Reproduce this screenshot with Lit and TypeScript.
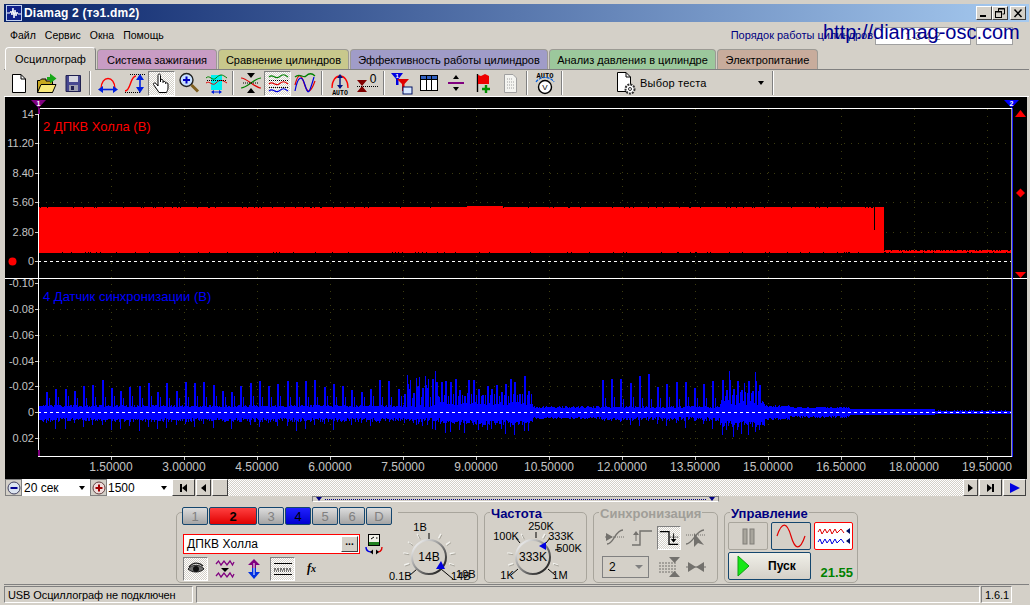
import { LitElement, html, css, svg } from 'lit';
import { customElement } from 'lit/decorators.js';

// small seeded generator, so the traces come out the same on every load
let seed = 12345;
const rnd = () => {
  seed = (seed * 1103515 + 12345) % 2147483648;
  return seed / 2147483648;
};

function redTrace() {
  let d = '';
  for (let x = 39; x < 1011; x++) {
    let top = x < 884 ? 207 + (rnd() < 0.1 ? 1 : 0) : 250 + (rnd() < 0.3 ? 1 : 0);
    if (x >= 467 && x < 503) top = 206;
    if (x === 874) top = 230;
    const bottom = 253 + (rnd() < 0.1 ? -1 : 0);
    d += `M${x}.5 ${top}V${bottom}`;
  }
  return d;
}

function blueTrace() {
  let d = '';
  const peaks = new Map<number, number>();
  const addPeaks = (from: number, to: number, step: number, min: number, max: number) => {
    for (let p = from; p < to; p += step) peaks.set(Math.round(p), min + rnd() * (max - min));
  };
  addPeaks(46, 440, 9.25, 20, 33);
  addPeaks(404, 530, 4.6, 14, 36);
  addPeaks(602, 722, 9.2, 24, 38);
  addPeaks(722, 760, 3.7, 18, 32);
  for (let x = 39; x < 1011; x++) {
    const r = rnd();
    let up: number, down: number;
    if (x < 440) { up = 5 + r * 2; down = 6 + rnd() * 4; }
    else if (x < 533) { up = 7 + r * 3; down = 8 + rnd() * 5; }
    else if (x < 600) { up = 4 + r * 2; down = 5 + rnd() * 2; }
    else if (x < 720) { up = 4 + r * 2; down = 5 + rnd() * 4; }
    else if (x < 765) { up = 7 + r * 5; down = 9 + rnd() * 6; }
    else if (x < 790) { up = 5 + r * 2; down = 6 + rnd() * 2; }
    else if (x < 850) { up = 4 + r; down = 4 + rnd() * 2; }
    else if (x < 935) { up = 3; down = 3; }
    else { up = 1 + r * 0.6; down = 2; }
    const peak = peaks.get(x);
    if (peak) { up = peak; down += rnd() * 11; }
    else if (peaks.get(x - 1)) up = peaks.get(x - 1) as number;
    if (peaks.get(x - 3) && x < 760) up += 9;
    d += `M${x}.5 ${Math.round(412 - up)}V${Math.round(412 + down)}`;
  }
  return d;
}

const RED = redTrace();
const BLUE = blueTrace();
const GRID_X = Array.from({ length: 13 }, (_, i) => 111 + i * 73);
const TOP_LABELS: [string, number][] = [['14', 114], ['11.20', 143], ['8.40', 173], ['5.60', 202], ['2.80', 232], ['0', 261]];
const LOW_LABELS: [string, number][] = [['-0.10', 283], ['-0.08', 309], ['-0.06', 335], ['-0.04', 361], ['-0.02', 386], ['0', 412], ['0.02', 438]];
const TIME_LABELS = ['1.50000', '3.00000', '4.50000', '6.00000', '7.50000', '9.00000', '10.50000', '12.00000', '13.50000', '15.00000', '16.50000', '18.00000', '19.50000'];

@customElement('scope-chart')
class ScopeChart extends LitElement {
  static styles = css`
    :host { display: block; width: 1022px; height: 382px; margin-left: 1px; background: #000; }
    svg { display: block; }
    text { font-family: "Liberation Sans", Arial, sans-serif; }
    .axis { fill: #c4c4c4; font-size: 11px; }
    .time { fill: #c4c4c4; font-size: 12px; }
    .name { font-size: 13px; }
  `;

  render() {
    const gridY = [143, 173, 202, 232, 309, 335, 361, 386, 438];
    return html`
      <svg width="1022" height="382" viewBox="5 97 1022 382" shape-rendering="crispEdges">
        ${GRID_X.map(x => svg`<path d="M${x}.5 109V456" stroke="#3c3c10" stroke-dasharray="1 6"/>
          <path d="M${x}.5 456V460" stroke="#c4c4c4"/>`)}
        ${gridY.map(y => svg`<path d="M39 ${y}.5H1011" stroke="#3c3c10" stroke-dasharray="1 6"/>`)}
        <path d=${RED} stroke="#ff0000" fill="none"/>
        <path d=${BLUE} stroke="#0000ff" fill="none"/>
        <path d="M38 261.5H1011" stroke="#fff" stroke-dasharray="3 3"/>
        <path d="M38 412.5H1011" stroke="#fff" stroke-dasharray="3 3"/>
        <path d="M38 108.5H1013M5 278.5H1027M38 456.5H1013M38.5 108V457" stroke="#fff"/>
        <path d="M1012.5 108V457" stroke="#2020ff"/>
        <path d="M1011.5 108V457" stroke="#fff" opacity="0.6"/>
        ${[...TOP_LABELS, ...LOW_LABELS].map(([t, y]) => svg`
          <text class="axis" x="34" y=${y + 4} text-anchor="end">${t}</text>
          <path d="M35 ${y}.5H38" stroke="#c4c4c4"/>`)}
        ${TIME_LABELS.map((t, i) => svg`<text class="time" x=${GRID_X[i]} y="471" text-anchor="middle">${t}</text>`)}
        <text class="name" x="43" y="131" fill="#ff0000">2 ДПКВ Холла (В)</text>
        <text class="name" x="43" y="301" fill="#0000ff">4 Датчик синхронизации (В)</text>
        <path d="M31 100H46L38.5 108Z" fill="#800080" shape-rendering="auto"/>
        <path d="M38 108H39.5V114H38Z" fill="#800080"/>
        <path d="M38 456H39.5V450H38Z" fill="#800080"/>
        <text x="38.5" y="106" font-size="7" font-weight="bold" fill="#fff" text-anchor="middle">1</text>
        <path d="M1004 100H1019L1011.5 108Z" fill="#0000ff" shape-rendering="auto"/>
        <text x="1011.5" y="106" font-size="7" font-weight="bold" fill="#fff" text-anchor="middle">2</text>
        <g fill="#ff0000" shape-rendering="auto">
          <path d="M1015 117L1020.5 110L1026 117Z"/>
          <path d="M1020.5 188.5L1025 193L1020.5 197.5L1016 193Z"/>
          <path d="M1015 272H1026L1020.5 278Z"/>
          <circle cx="12.5" cy="261.5" r="4"/>
        </g>
      </svg>
    `;
  }
}

const ic = (body: unknown, w = 24, h = 24) =>
  html`<svg width=${w} height=${h} viewBox="0 0 ${w} ${h}">${body}</svg>`;

const ICONS = {
  newDoc: svg`<path d="M5.5 3.5H14L18.5 8V21.5H5.5Z" fill="#fff" stroke="#000"/><path d="M14 3.5V8H18.5" fill="none" stroke="#000"/>`,
  open: svg`<path d="M3.5 21.5V9.5H6L7.5 8H12V10H18.5V21.5Z" fill="#c8a820" stroke="#000"/><path d="M3.5 21.5L7 13.5H22L18.5 21.5Z" fill="#f8e878" stroke="#000"/><path d="M16 2.5L22.5 7.5L16 12.5V9H13V6H16Z" fill="#18a818"/>`,
  save: svg`<path d="M5 4.5H19.5V20.5H5Z" fill="#484890" stroke="#202050"/><rect x="8" y="5" width="9" height="6" fill="#d8d8e0"/><rect x="8" y="14" width="9" height="6" fill="#a0a0b0"/><rect x="10" y="15" width="3" height="4" fill="#202050"/>`,
  widthArc: svg`<path d="M5 18C5 4 19 4 19 18" fill="none" stroke="#ff0000" stroke-width="1.4"/><path d="M4 18.5H20" stroke="#0020e0" stroke-width="1.6"/><path d="M2 18.5L7 15V22ZM22 18.5L17 15V22Z" fill="#0020e0"/>`,
  heightS: svg`<path d="M2 20C8 20 7 5 13 5" fill="none" stroke="#ff0000" stroke-width="1.4"/><path d="M7 3.5H22M2 21.5H18" stroke="#000" stroke-dasharray="1 1"/><path d="M17 7V18" stroke="#0020e0" stroke-width="1.6"/><path d="M17 3L13 9H21ZM17 22L13 16H21Z" fill="#0020e0"/>`,
  hand: svg`<path d="M8 20L3.5 13.5C3 12 5 11.5 6 12.5L8 15V4.5C8 2.5 10.5 2.5 10.5 4.5V11V9.5C10.5 8 13 8 13 9.5V11.5C13 10 15.5 10 15.5 11.5V12.5C15.5 11.5 18 11.5 18 13V17C18 19 17 20 16.5 21.5H9Z" fill="#fff" stroke="#000"/>`,
  zoom: svg`<circle cx="9.5" cy="9" r="6.5" fill="#c8e0ff" stroke="#202020" stroke-width="1.4"/><path d="M6 9H13M9.5 5.5V12.5" stroke="#0000c0" stroke-width="2"/><path d="M14.5 14L21 20.5" stroke="#806020" stroke-width="3"/>`,
  cyanWave: svg`<rect x="7" y="4" width="11" height="15" fill="#00f0f0"/><path d="M2 7C6 3 8 11 12 7S18 3 23 7" fill="none" stroke="#008000"/><path d="M2 12C6 9 8 16 12 12S18 9 23 12" fill="none" stroke="#e00000"/><path d="M3 9.5H22" stroke="#000" stroke-dasharray="1 1"/><path d="M8 21H17" stroke="#0020e0"/><path d="M7 21L10 19V23ZM18 21L15 19V23Z" fill="#0020e0"/>`,
  cross: svg`<path d="M2 7C8 7 16 17 22 17" fill="none" stroke="#e00000" stroke-width="1.2"/><path d="M2 17C8 17 16 7 22 7" fill="none" stroke="#008000" stroke-width="1.2"/><path d="M8 2H16L12 7ZM8 22H16L12 17Z" fill="#000"/><path d="M4 12H20" stroke="#000" stroke-dasharray="1 1"/>`,
  stack: svg`<path d="M3 6C7 2 9 9 13 6S18 3 22 6" fill="none" stroke="#008000" stroke-width="1.2"/><path d="M3 13C7 9 9 16 13 13S18 10 22 13" fill="none" stroke="#e00000" stroke-width="1.2"/><path d="M3 20C7 16 9 23 13 20S18 17 22 20" fill="none" stroke="#0000e0" stroke-width="1.2"/><path d="M3 9.5H22M3 16.5H22" stroke="#000" stroke-dasharray="1 1"/>`,
  overlap: svg`<path d="M2 12C5 0 8 0 11 10S17 22 22 8" fill="none" stroke="#e00000" stroke-width="1.2" transform="translate(0 2)"/><path d="M2 20C5 4 9 4 12 14S16 24 21 6" fill="none" stroke="#0000e0" stroke-width="1.2"/><path d="M2 6C7 1 10 8 13 5S19 2 22 5" fill="none" stroke="#008000" stroke-width="1.2"/>`,
  autoArc: svg`<path d="M4 17C4 1 20 1 20 17" fill="none" stroke="#ff0000" stroke-width="1.3"/><path d="M12 6V15" stroke="#001080" stroke-width="1.4"/><path d="M12 3L9 7H15ZM12 18L9 14H15Z" fill="#001080"/><text x="12" y="23.5" font-size="6.5" font-weight="bold" text-anchor="middle" font-family="Liberation Mono, monospace">AUTO</text>`,
  zero: svg`<path d="M2 9H12L7 15ZM2 21H12L7 15Z" fill="#800000"/><path d="M2 15.5H23" stroke="#000" stroke-dasharray="1 1"/><text x="18" y="12" font-size="12" text-anchor="middle" font-family="Liberation Sans, sans-serif">0</text>`,
  funnel: svg`<path d="M1 2H13L8.5 8V14H6V8Z" fill="#0000e0"/><path d="M7 8H19L14.5 13V20H12V13Z" fill="#e00000"/><rect x="13" y="16" width="9" height="7" fill="#d8e8ff" stroke="#001060"/><text x="5.5" y="6.5" font-size="6" font-weight="bold" fill="#fff">1</text>`,
  table: svg`<rect x="3.5" y="4.5" width="17" height="15" fill="#fff" stroke="#000"/><rect x="3.5" y="4.5" width="17" height="4" fill="#3060c0" stroke="#000"/><path d="M9.5 4.5V19.5M14.5 4.5V19.5" stroke="#000"/>`,
  divide: svg`<path d="M4 12H20" stroke="#800080" stroke-width="2"/><path d="M9 8L12 4L15 8ZM9 16L12 20L15 16Z" fill="#000"/>`,
  flag: svg`<path d="M6.5 3V21" stroke="#000" stroke-width="1.4"/><path d="M7 4L10 5L14 3L18 5V13H7Z" fill="#ee0000"/><path d="M15 14V22M11 18H19" stroke="#009000" stroke-width="2.4"/>`,
  note: svg`<path d="M6.5 3.5H15L18.5 7V21.5H6.5Z" fill="#f4f4f0" stroke="#a0a0a0"/><path d="M9 8H14M9 11H16M9 14H16M9 17H16" stroke="#a0a0a0" stroke-dasharray="1 1"/>`,
  autoV: svg`<text x="12" y="6.5" font-size="7" font-weight="bold" text-anchor="middle" font-family="Liberation Mono, monospace">AUTO</text><path d="M3 11C7 5 17 5 21 11" fill="none" stroke="#0060e0" stroke-width="1.2" stroke-dasharray="3 1"/><circle cx="12" cy="16" r="6.5" fill="#fff" stroke="#000" stroke-width="1.4"/><text x="12" y="19" font-size="8" text-anchor="middle" font-family="Liberation Sans, sans-serif">V</text>`,
  testDoc: svg`<path d="M3.5 1.5H12L16.5 6V20.5H3.5Z" fill="#fff" stroke="#000"/><path d="M12 1.5V6H16.5" fill="none" stroke="#000"/><circle cx="16" cy="18" r="4.5" fill="#fff" stroke="#303030" stroke-width="2" stroke-dasharray="2 1"/><circle cx="16" cy="18" r="1.5" fill="none" stroke="#303030"/>`,
};

const KNOB_TICKS = (cx: number, cy: number, skip: number[]) => {
  const out = [];
  for (let a = 135; a <= 405; a += 27) {
    if (skip.includes(a)) continue;
    const r = (a * Math.PI) / 180;
    const x1 = cx + Math.cos(r) * 21, y1 = cy + Math.sin(r) * 21;
    const x2 = cx + Math.cos(r) * 26, y2 = cy + Math.sin(r) * 26;
    out.push(svg`<path d="M${x1} ${y1}L${x2} ${y2}" stroke="#f4f4f0" stroke-width="1.4"/>
      <path d="M${x1 + 1} ${y1 + 1}L${x2 + 1} ${y2 + 1}" stroke="#a8a59c"/>`);
  }
  return out;
};

@customElement('app-root')
class AppRoot extends LitElement {
  static styles = css`
    :host { display: block; width: 1032px; height: 608px; background: #fff; overflow: hidden;
      font-family: "Liberation Sans", Arial, sans-serif; font-size: 11px; color: #000; }
    * { box-sizing: border-box; }
    svg { display: block; }
    .window { position: relative; width: 1030px; height: 605px; padding: 4px 1px 0 4px; background: #d4d0c8;
      display: flex; flex-direction: column; }

    .title { height: 18px; display: flex; align-items: center; gap: 2px; padding: 0 2px;
      background: linear-gradient(90deg, #0a246a, #a6caf0); color: #fff; font: bold 12px "Liberation Sans", sans-serif; letter-spacing: 0.2px; }
    .title .logo { width: 16px; height: 16px; background: #10208a; border: 1px solid #c0d0f0; }
    .title .caption { flex: 1; }
    .winbtn { width: 16px; height: 14px; background: #d4d0c8; border: 1px solid; border-color: #fff #404040 #404040 #fff;
      display: flex; align-items: center; justify-content: center; }
    .winbtns { display: flex; margin-right: 1px; }

    .menu { height: 25px; display: flex; align-items: center; gap: 9px; padding-left: 6px; padding-top: 1px; font-size: 10.5px; }
    .order { margin-left: auto; margin-right: 156px; color: #000080; font-size: 11px; }
    .inputs { position: absolute; top: 27px; left: 875px; display: flex; gap: 5px; }
    .inp { height: 18px; background: #fff; border: 1px solid #a0a0a0; color: #606060; text-align: center; line-height: 16px; }
    .inp.a { width: 96px; }
    .inp.b { width: 37px; }
    .url { position: absolute; top: 21px; left: 823px; font-size: 20px; color: #000090; white-space: nowrap; }

    .tabs { height: 23px; display: flex; align-items: flex-end; padding-left: 1px; gap: 1px; border-bottom: 1px solid #808080; }
    .tab { height: 20px; border: 1px solid #9c9a94; border-bottom: none; border-radius: 4px 4px 0 0; display: flex;
      align-items: center; justify-content: center; font-size: 11px; }
    .tab.on { height: 23px; background: #d4d0c8; border-color: #fff #808080 #d4d0c8 #fff; margin-bottom: -1px; width: 91px; }

    .toolbar { height: 27px; display: flex; align-items: center; padding-left: 1px; border-bottom: 1px solid #fff; }
    .tb { width: 27px; height: 25px; display: flex; align-items: center; justify-content: center; }
    .tb.on { border: 1px solid; border-color: #808080 #fff #fff #808080; background: repeating-conic-gradient(#fff 0 25%, #d4d0c8 0 50%) 0 0 / 2px 2px; }
    .sep { width: 8px; display: flex; justify-content: center; }
    .sep i { width: 2px; height: 24px; border-left: 1px solid #808080; border-right: 1px solid #fff; }
    .test { width: 203px; height: 25px; display: flex; align-items: center; padding-left: 48px; gap: 2px; font-size: 11px; letter-spacing: 0.2px; }
    .test .arrow { margin-left: 49px; }
    .arrow { width: 0; height: 0; border: 3.5px solid transparent; border-top: 4px solid #000; border-bottom: none; }

    .scroll { height: 17px; margin-left: 1px; display: flex; align-items: stretch; width: 1021px; }
    .combo { background: #fff; display: flex; align-items: center; font-size: 12px; }
    .combo .arrow { margin-left: auto; margin-right: 5px; }
    .c1 { width: 68px; padding-left: 2px; }
    .c2 { width: 65px; padding-left: 1px; }
    .round { width: 17px; background: #d4d0c8; border: 1px solid #808080; display: flex; align-items: center; justify-content: center; }
    .sb { background: #d4d0c8; border: 1px solid; border-color: #fff #404040 #404040 #fff; display: flex; align-items: center; justify-content: center; }
    .sb.w15 { width: 15px; margin-left: 1px; }
    .sb.w16 { width: 16px; margin-left: 1px; }
    .sb.w23 { width: 23px; }
    .sb.gap { margin-left: 1px; }
    .track { flex: 1; background: repeating-conic-gradient(#fff 0 25%, #d4d0c8 0 50%) 0 0 / 2px 2px; }
    .lt { width: 0; height: 0; border: 4px solid transparent; border-left: none; border-right: 5px solid #000; }
    .rt { width: 0; height: 0; border: 4px solid transparent; border-right: none; border-left: 5px solid #000; }
    .rt.blue { border-left-color: #0000e0; border-width: 5px 0 5px 10px; }
    .bar { width: 2px; height: 8px; background: #000; }

    .split { height: 6px; margin-left: 308px; width: 407px; border: 1px solid #808080; border-bottom-color: #fff;
      display: flex; align-items: center; padding: 0 3px; gap: 3px; }
    .split .dots { flex: 1; border-top: 1px dotted #000080; }
    .split b { width: 0; height: 0; border: 3px solid transparent; border-top: 4px solid #000080; border-bottom: none; }

    .panel { height: 83px; display: flex; gap: 6px; padding: 10px 0 0 172px; border-bottom: 1px solid #808080; }
    .group { position: relative; height: 71px; border: 1px solid #a8a59c; border-radius: 5px; display: flex; }
    .g1 { width: 302px; }
    .g2 { width: 103px; }
    .g3 { width: 125px; }
    .g4 { width: 134px; }
    .legend { position: absolute; top: -6px; left: 5px; padding: 0 1px; background: #d4d0c8; font: bold 13px "Liberation Sans", sans-serif; color: #000080; line-height: 13px; }
    .legend.off { color: #a09e98; }

    .left { width: 201px; padding-left: 6px; }
    .channels { display: flex; gap: 1px; margin-top: -6px; margin-left: -1px; height: 18px; width: 216px; background: #d4d0c8; }
    .ch { width: 26px; height: 18px; border: 1px solid #14466e; border-radius: 2px; background: linear-gradient(#dcdcdc, #a4a4a4);
      display: flex; align-items: center; justify-content: center; color: #808080; font-size: 13px; }
    .ch.red { width: 48px; background: linear-gradient(#ff4040, #e00000); color: #000; font-weight: bold; }
    .ch.blue { background: linear-gradient(#2020ff, #0000d0); color: #000; }
    .picker { display: flex; align-items: center; gap: 3px; margin-top: 8px; }
    .picker svg { flex: none; }
    .pick { flex: none; width: 177px; height: 20px; border: 1px solid #ff0000; outline: 1px solid #ff0000; outline-offset: -1px; background: #fff; display: flex; align-items: center; padding-left: 3px; font-size: 12px; letter-spacing: 0.1px; }
    .dots3 { margin-left: auto; margin-right: 1px; width: 17px; height: 16px; background: #d4d0c8; border: 1px solid; border-color: #fff #404040 #404040 #fff;
      text-align: center; font-weight: bold; font-size: 10px; line-height: 10px; }
    .tools { display: flex; align-items: center; margin-top: 1px; height: 25px; }
    .tool { width: 25px; height: 24px; display: flex; align-items: center; justify-content: center; margin-right: 4px; }
    .tool.on { border: 1px solid; border-color: #808080 #fff #fff #808080; background: repeating-conic-gradient(#fff 0 25%, #d4d0c8 0 50%) 0 0 / 2px 2px; }
    .fx { font: italic bold 12px "Liberation Serif", serif; }

    .sync { display: grid; grid-template-columns: repeat(4, 27px); grid-auto-rows: 29px; padding: 10px 0 0 7px; align-items: center; justify-items: center; }
    .sync .tb { opacity: 0.45; height: 24px; }
    .sync .tb.on { opacity: 1; width: 24px; }
    .dis { grid-column: span 2; justify-self: start; width: 47px; height: 22px; border: 1px solid #808080; display: flex; align-items: center; padding: 0 5px 0 6px; font-size: 12px; justify-content: space-between; margin-left: 1px; }
    .dis .arrow { border-top-color: #808080; border-width: 4px; border-bottom: none; }

    .ctl { display: grid; grid-template-columns: 40px 40px 39px; grid-template-rows: 28px 28px; gap: 2px 3px; padding: 9px 0 0 3px; }
    .cb { border: 1px solid #14466e; border-radius: 2px; background: linear-gradient(#f0efe8, #d4d0c8); display: flex; align-items: center; justify-content: center; }
    .cb.flat { border-color: #a8a59c; background: #d4d0c8; }
    .cb.wave { border-color: #ff0000; background: #fff; }
    .cb.plain { background: #d4d0c8; }
    .start { grid-column: span 2; justify-content: flex-start; padding-left: 6px; gap: 13px; font-weight: bold; font-size: 12px; }
    .count { color: #008000; font-weight: bold; font-size: 13px; align-self: end; text-align: right; }

    .status { height: 19px; display: flex; gap: 3px; padding-top: 1px; }
    .cell { height: 17px; border: 1px solid; border-color: #808080 #fff #fff #808080; display: flex; align-items: center; padding-left: 3px; font-size: 11px; letter-spacing: -0.1px; }
    .s1 { width: 189px; }
    .s2 { width: 784px; }
    .s3 { width: 31px; margin-left: -2px; }
  `;

  render() {
    return html`
      <div class="window">
        <div class="title">
          <div class="logo">${ic(svg`<path d="M0 7H3L4 5L5 9L6 2L7 12L8 4L9 10L10 6L11 8H14" fill="none" stroke="#fff"/>`, 14, 14)}</div>
          <span class="caption">Diamag 2 (тэ1.dm2)</span>
          <div class="winbtns">
            <div class="winbtn">${ic(svg`<rect x="2" y="8" width="6" height="2" fill="#000"/>`, 12, 12)}</div>
            <div class="winbtn">${ic(svg`<path d="M4.5 1.5H10.5V7H8.5M4.5 1.5V4" fill="none" stroke="#000"/><rect x="1.5" y="4.5" width="6" height="6" fill="none" stroke="#000"/><path d="M4 2H11M2 5H8" stroke="#000"/>`, 12, 12)}</div>
            <div class="winbtn" style="margin-left:2px">${ic(svg`<path d="M2.5 2.5L9.5 10M9.5 2.5L2.5 10" stroke="#000" stroke-width="1.5"/>`, 12, 12)}</div>
          </div>
        </div>

        <div class="menu">
          <span>Файл</span><span>Сервис</span><span>Окна</span><span>Помощь</span>
          <span class="order">Порядок работы цилиндров</span>
        </div>
        <div class="inputs">
          <div class="inp a">1-3-4-2</div>
          <div class="inp b"></div>
        </div>
        <div class="url">http://diamag-osc.com</div>

        <div class="tabs">
          <div class="tab on">Осциллограф</div>
          ${[
            ['Система зажигания', 120, '#c89cc4'],
            ['Сравнение цилиндров', 131, '#c8c88c'],
            ['Эффективность работы цилиндров', 198, '#a09cc8'],
            ['Анализ давления в цилиндре', 167, '#9cc89c'],
            ['Электропитание', 101, '#c8ac9c'],
          ].map(([name, w, bg]) => html`<div class="tab" style="width:${w}px;background:${bg}">${name}</div>`)}
        </div>

        <div class="toolbar">
          ${this.tb(ICONS.newDoc)}${this.tb(ICONS.open)}${this.tb(ICONS.save)}
          <div class="sep"><i></i></div>
          ${this.tb(ICONS.widthArc)}${this.tb(ICONS.heightS)}${this.tb(ICONS.hand, true)}${this.tb(ICONS.zoom)}${this.tb(ICONS.cyanWave)}
          <div class="sep"><i></i></div>
          ${this.tb(ICONS.cross)}${this.tb(ICONS.stack, true)}${this.tb(ICONS.overlap)}
          <div class="sep"><i></i></div>
          ${this.tb(ICONS.autoArc)}${this.tb(ICONS.zero)}
          <div class="sep"><i></i></div>
          ${this.tb(ICONS.funnel)}${this.tb(ICONS.table)}${this.tb(ICONS.divide)}${this.tb(ICONS.flag)}${this.tb(ICONS.note)}
          <div class="sep"><i></i></div>
          ${this.tb(ICONS.autoV)}
          <div class="sep"><i></i></div>
          <div class="test">${ic(ICONS.testDoc)}<span>Выбор теста</span><div class="arrow"></div></div>
          <div class="sep"><i></i></div>
        </div>

        <scope-chart></scope-chart>

        <div class="scroll">
          <div class="round">${ic(svg`<circle cx="7" cy="7" r="6" fill="#dce4f0" stroke="#404060"/><path d="M3.5 7H10.5" stroke="#000090" stroke-width="2"/>`, 14, 14)}</div>
          <div class="combo c1">20 сек<div class="arrow"></div></div>
          <div class="round">${ic(svg`<circle cx="7" cy="7" r="6" fill="#f0dcdc" stroke="#604040"/><path d="M3.5 7H10.5M7 3.5V10.5" stroke="#a00000" stroke-width="2"/>`, 14, 14)}</div>
          <div class="combo c2">1500<div class="arrow"></div></div>
          <div class="sb w23"><div class="bar"></div><div class="lt"></div></div>
          <div class="sb w15"><div class="lt"></div></div>
          <div class="sb w16"></div>
          <div class="track"></div>
          <div class="sb" style="width:15px"><div class="rt"></div></div>
          <div class="sb w23 gap"><div class="rt"></div><div class="bar"></div></div>
          <div class="sb w23 gap"><div class="rt blue"></div></div>
        </div>

        <div class="split"><b></b><div class="dots"></div><b></b></div>

        <div class="panel">
          <div class="group g1">
            <div class="left">
              <div class="channels">
                <div class="ch">1</div><div class="ch red">2</div><div class="ch">3</div><div class="ch blue">4</div>
                <div class="ch">5</div><div class="ch">6</div><div class="ch">D</div>
              </div>
              <div class="picker">
                <div class="pick">ДПКВ Холла<div class="dots3">...</div></div>
                ${ic(svg`<rect x="5.5" y="1.5" width="11" height="11" fill="#f0f0e8" stroke="#000"/><path d="M8 6L11 4M13 5H14.5" stroke="#000"/><rect x="6" y="9" width="10" height="3" fill="#208020"/><path d="M3 14C3 19 7 19 10 19" fill="none" stroke="#0000e0" stroke-width="1.4"/><path d="M19 14C19 19 16 19 13 19" fill="none" stroke="#e00000" stroke-width="1.4"/><path d="M10 16.5V21.5L7 19ZM13 16.5V21.5L16 19Z" fill="#000"/>`, 22, 22)}
              </div>
              <div class="tools">
                <div class="tool on">${ic(svg`<path d="M2 10C6 5 14 5 18 10C14 14 6 14 2 10Z" fill="#707070" stroke="#202020"/><circle cx="10" cy="10" r="3" fill="#101010"/><path d="M3 8C7 3 13 3 17 7" fill="none" stroke="#202020" stroke-width="1.4"/>`, 20, 20)}</div>
                <div class="tool">${ic(svg`<path d="M1 5L3.5 2L6 6L9 2L12 6L15 2L17.5 6L19 3M1 17L3.5 14L6 18L9 14L12 18L15 14L17.5 18L19 15" fill="none" stroke="#800080" stroke-width="1.3"/><path d="M6 9H14L10 13Z" fill="#000"/>`, 20, 20)}</div>
                <div class="tool">${ic(svg`<path d="M10 1L16 7H12V10H8V7H4Z" fill="#800080"/><path d="M10 21L16 14H12V10H8V14H4Z" fill="#0030e0"/><path d="M10 5V17" stroke="#fff"/>`, 20, 22)}</div>
                <div class="tool on">${ic(svg`<path d="M1 4.5H19M1 15.5H19" stroke="#000"/><path d="M1 10H19" stroke="#000" stroke-dasharray="2 1"/><path d="M1 12H19" stroke="#000" stroke-dasharray="1 1"/>`, 20, 20)}</div>
                <div class="tool fx">f<sub style="font-size:10px;line-height:0">x</sub></div>
              </div>
            </div>
            ${this.voltKnob()}
          </div>

          <div class="group g2">
            <div class="legend">Частота</div>
            ${this.freqKnob()}
          </div>

          <div class="group g3">
            <div class="legend off">Синхронизация</div>
            <div class="sync">
              <div class="tb">${ic(svg`<path d="M4 18C11 18 12 4 20 4" fill="none" stroke="#000" stroke-width="1.3"/><path d="M3 7L10 11L3 15Z" fill="#000"/><path d="M2 11H22" stroke="#000" stroke-dasharray="1 1"/>`)}</div>
              <div class="tb">${ic(svg`<path d="M2 19H10V5H22" fill="none" stroke="#000" stroke-width="1.4"/><path d="M6 8V15" stroke="#000"/><path d="M6 5L3 9H9Z" fill="#000"/>`)}</div>
              <div class="tb on">${ic(svg`<path d="M2 5H12V19H22" fill="none" stroke="#000" stroke-width="1.4"/><path d="M17 7V14" stroke="#000"/><path d="M17 17L14 13H20Z" fill="#000"/><path d="M13 11H22" stroke="#000" stroke-dasharray="1 1"/>`)}</div>
              <div class="tb">${ic(svg`<path d="M2 18C9 18 12 4 20 4" fill="none" stroke="#000" stroke-width="1.3"/><path d="M10 7L20 19L14 17L10 21Z" fill="#000"/><path d="M2 9H22" stroke="#000" stroke-dasharray="1 1"/>`)}</div>
              <div class="dis">2<div class="arrow"></div></div>
              <div class="tb">${ic(svg`<path d="M2 8H19M2 11H19M2 14H19M2 17H19" stroke="#000" stroke-dasharray="2 1"/><path d="M12 2H23L17.5 8ZM12 22H23L17.5 16Z" fill="#000"/>`)}</div>
              <div class="tb">${ic(svg`<path d="M2 12H22" stroke="#000"/><path d="M4 7L12 12L4 17ZM20 7L12 12L20 17Z" fill="#000"/>`)}</div>
            </div>
          </div>

          <div class="group g4">
            <div class="legend">Управление</div>
            <div class="ctl">
              <div class="cb flat">${ic(svg`<rect x="5" y="4" width="4" height="15" fill="#a8a59c" stroke="#807e78"/><rect x="12" y="4" width="4" height="15" fill="#a8a59c" stroke="#807e78"/>`, 20, 22)}</div>
              <div class="cb plain">${ic(svg`<path d="M2 11C7 -4 12 -3 16 11S25 26 30 11" fill="none" stroke="#e00000" stroke-width="1.2" transform="translate(0 1)"/>`, 32, 24)}</div>
              <div class="cb wave">${ic(svg`<path d="M1 7L3 4L5 9L8 4L10 8L13 4L15 9L18 4L20 8L24 4L27 8" fill="none" stroke="#e00000"/><path d="M1 17L3 14L5 19L8 14L10 18L13 14L15 19L18 14L20 18L24 14L27 18" fill="none" stroke="#0000e0"/><path d="M33 3V9L29 6ZM33 13V19L29 16Z" fill="#001060"/>`, 34, 22)}</div>
              <div class="cb start">${ic(svg`<path d="M3 3L14 13L3 23Z" fill="#18e818" stroke="#10a010"/>`, 20, 26)}<span>Пуск</span></div>
              <div class="count">21.55</div>
            </div>
          </div>
        </div>

        <div class="status">
          <div class="cell s1">USB Осциллограф не подключен</div>
          <div class="cell s2"></div>
          <div class="cell s3">1.6.1</div>
        </div>
      </div>
    `;
  }

  tb(icon: unknown, on = false) {
    return html`<div class="tb ${on ? 'on' : ''}">${ic(icon)}</div>`;
  }

  // knobs keep page coordinates in their viewBox, labels are placed around the ring
  voltKnob() {
    const cx = 429, cy = 555;
    return html`
      <svg width="99" height="71" viewBox="378 511 99 71" font-family="Liberation Sans, sans-serif" font-size="11">
        ${KNOB_TICKS(cx, cy, [135, 270, 405])}
        <path d="M429 537V531M417 567L409 574M441 567L453 577" stroke="#000"/>
        <defs><linearGradient id="ring" x1="0" y1="0" x2="1" y2="1"><stop offset="0.1" stop-color="#f0f0f0"/><stop offset="0.9" stop-color="#202020"/></linearGradient></defs>
        <circle cx=${cx} cy=${cy} r="17" fill="none" stroke="url(#ring)" stroke-width="2"/>
        <path d="M441 559L445 567H436Z" fill="#0000e0"/>
        <text x=${cx} y="559" text-anchor="middle" font-size="12">14В</text>
        <text x="420" y="529" text-anchor="middle">1В</text>
        <text x="389" y="578">0.1В</text>
        <text x="451" y="578">14В</text>
        <text x="456" y="576">10В</text>
      </svg>
    `;
  }

  freqKnob() {
    const cx = 533, cy = 556;
    return html`
      <svg width="101" height="69" viewBox="485 512 101 69" font-family="Liberation Sans, sans-serif" font-size="11">
        ${KNOB_TICKS(cx, cy, [135, 216, 270, 324, 351, 405])}
        <path d="M536 537V531M520 542L516 537M546 542L550 537M555 549L560 548M518 568L511 574M548 568L555 574" stroke="#000"/>
        <defs><linearGradient id="ring2" x1="0" y1="0" x2="1" y2="1"><stop offset="0.1" stop-color="#f0f0f0"/><stop offset="0.9" stop-color="#202020"/></linearGradient></defs>
        <circle cx=${cx} cy=${cy} r="17" fill="none" stroke="url(#ring2)" stroke-width="2"/>
        <path d="M539 545L546 541V549Z" fill="#0000e0"/>
        <text x=${cx} y="560" text-anchor="middle" font-size="12">333K</text>
        <text x="541" y="529" text-anchor="middle">250K</text>
        <text x="506" y="539" text-anchor="middle">100K</text>
        <text x="561" y="539" text-anchor="middle">333K</text>
        <text x="569" y="551" text-anchor="middle">500K</text>
        <text x="507" y="578" text-anchor="middle">1K</text>
        <text x="560" y="578" text-anchor="middle">1M</text>
      </svg>
    `;
  }
}
